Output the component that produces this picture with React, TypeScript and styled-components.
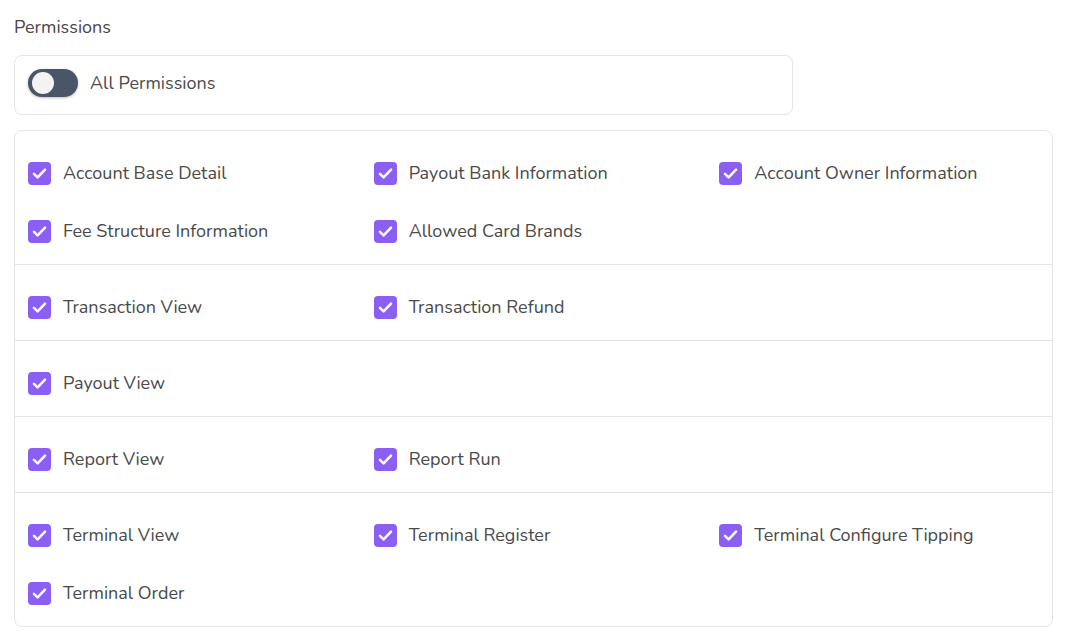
import React from "react";
import styled, { createGlobalStyle } from "styled-components";

const Global = createGlobalStyle`
  html, body { margin: 0; padding: 0; background: #ffffff; }
  body { font-family: "Nunito", "Lato", "Noto Sans", sans-serif; color: #4a4a4a; }
`;

const Page = styled.div`
  padding: 15px 14px 0 14px;
  width: 1040px;
`;

const Title = styled.div`
  font-size: 18px;
  color: #4b4545;
  line-height: 24px;
  margin-bottom: 16px;
`;

const AllBox = styled.div`
  width: 779px;
  height: 60px;
  box-sizing: border-box;
  border: 1px solid #e4e4e7;
  border-radius: 8px;
  display: flex;
  align-items: center;
  padding: 0 0 4px 13px;
  gap: 12px;
  margin-bottom: 15px;
`;

const Toggle = styled.div`
  width: 50px;
  height: 28px;
  border-radius: 14px;
  background: #4a5568;
  box-shadow: 0 1px 3px rgba(0, 0, 0, 0.25);
  display: flex;
  align-items: center;
  padding-left: 4px;
  box-sizing: border-box;
`;

const Knob = styled.div`
  width: 22px;
  height: 22px;
  border-radius: 50%;
  background: #f3f3f3;
`;

const Label = styled.span`
  font-size: 18px;
  color: #4a4a4a;
  line-height: 24px;
`;

const Card = styled.div`
  width: 1039px;
  box-sizing: border-box;
  border: 1px solid #e4e4e7;
  border-radius: 8px;
`;

const Section = styled.div<{ $last?: boolean }>`
  display: grid;
  grid-template-columns: repeat(3, 1fr);
  row-gap: 30px;
  padding: 28px 0 19px 0;
  border-bottom: ${(p) => (p.$last ? "none" : "1px solid #e4e4e7")};
`;

const Item = styled.label`
  display: flex;
  align-items: center;
  gap: 12px;
  height: 28px;
  padding-left: 13px;
`;

const Box = styled.span`
  width: 23px;
  height: 23px;
  border-radius: 4px;
  background: #8c5ff4;
  display: flex;
  align-items: center;
  justify-content: center;
  flex-shrink: 0;
`;

const Check = () => (
  <Box>
    <svg width="17" height="17" viewBox="0 0 16 16" fill="none">
      <path d="M2.8 8.4 L6.2 11.6 L13.2 4.4" stroke="#fff" strokeWidth="2.4" strokeLinecap="round" strokeLinejoin="round" />
    </svg>
  </Box>
);

const sections: string[][] = [
  ["Account Base Detail", "Payout Bank Information", "Account Owner Information", "Fee Structure Information", "Allowed Card Brands"],
  ["Transaction View", "Transaction Refund"],
  ["Payout View"],
  ["Report View", "Report Run"],
  ["Terminal View", "Terminal Register", "Terminal Configure Tipping", "Terminal Order"],
];

export default function App() {
  return (
    <Page>
      <Global />
      <Title>Permissions</Title>
      <AllBox>
        <Toggle>
          <Knob />
        </Toggle>
        <Label>All Permissions</Label>
      </AllBox>
      <Card>
        {sections.map((s, i) => (
          <Section key={i} $last={i === sections.length - 1}>
            {s.map((name) => (
              <Item key={name}>
                <Check />
                <Label>{name}</Label>
              </Item>
            ))}
          </Section>
        ))}
      </Card>
    </Page>
  );
}
